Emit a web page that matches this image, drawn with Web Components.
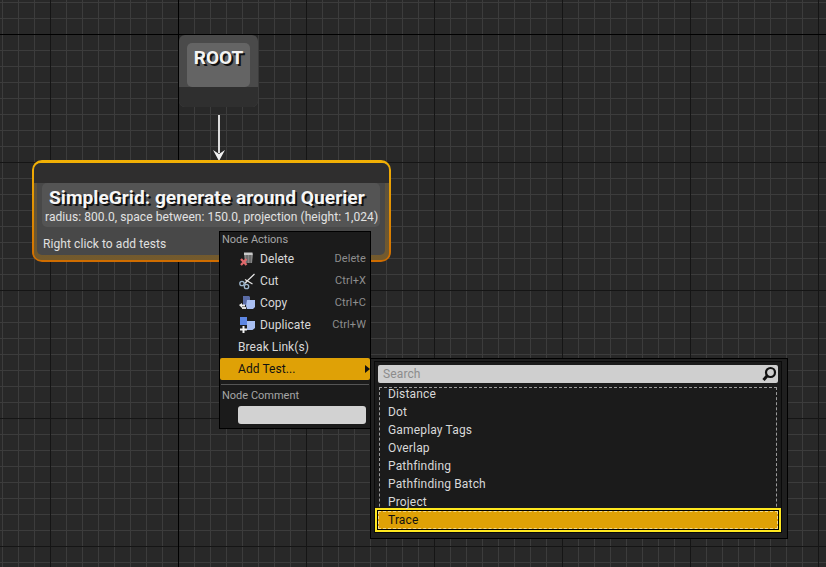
<!DOCTYPE html>
<html>
<head>
<meta charset="utf-8">
<title>Behavior query graph</title>
<style>
    html, body { margin: 0; padding: 0; width: 826px; height: 567px; overflow: hidden; background: #282828; }
    body { font-family: Roboto, "Liberation Sans", sans-serif; }
</style>
</head>
<body>
<graph-canvas>
    <root-node></root-node>
    <query-node title="SimpleGrid: generate around Querier"
                detail="radius: 800.0, space between: 150.0, projection (height: 1,024)"
                hint="Right click to add tests"></query-node>
    <context-menu>
        <menu-heading>Node Actions</menu-heading>
        <menu-item shortcut="Delete"><menu-icon name="delete" slot="icon"></menu-icon>Delete</menu-item>
        <menu-item shortcut="Ctrl+X"><menu-icon name="cut" slot="icon"></menu-icon>Cut</menu-item>
        <menu-item shortcut="Ctrl+C"><menu-icon name="copy" slot="icon"></menu-icon>Copy</menu-item>
        <menu-item shortcut="Ctrl+W"><menu-icon name="duplicate" slot="icon"></menu-icon>Duplicate</menu-item>
        <menu-item>Break Link(s)</menu-item>
        <menu-item active arrow>Add Test...</menu-item>
        <menu-rule></menu-rule>
        <menu-heading>Node Comment</menu-heading>
        <comment-box></comment-box>
    </context-menu>
    <test-picker>
        <picker-row>Distance</picker-row>
        <picker-row>Dot</picker-row>
        <picker-row>Gameplay Tags</picker-row>
        <picker-row>Overlap</picker-row>
        <picker-row>Pathfinding</picker-row>
        <picker-row>Pathfinding Batch</picker-row>
        <picker-row>Project</picker-row>
        <picker-row selected>Trace</picker-row>
    </test-picker>
</graph-canvas>

<script>
class GraphCanvas extends HTMLElement {
    connectedCallback() {
        this.attachShadow({ mode: 'open' });
        this.shadowRoot.innerHTML = `
            <style>
                :host {
                    display: block;
                    position: relative;
                    width: 826px;
                    height: 567px;
                    overflow: hidden;
                    background-color: #282828;
                    background-image:
                        linear-gradient(#000, #000),
                        linear-gradient(#000, #000),
                        linear-gradient(to right, #151515 1px, transparent 1px),
                        linear-gradient(to bottom, #151515 1px, transparent 1px),
                        linear-gradient(to right, #3c3c3c 1px, transparent 1px),
                        linear-gradient(to bottom, #3c3c3c 1px, transparent 1px);
                    background-size: 1px 100%, 100% 1px, 128px 128px, 128px 128px, 16px 16px, 16px 16px;
                    background-position: 178px 0, 0 34px, 50px 0, 0 34px, 2px 0, 0 2px;
                    background-repeat: no-repeat, no-repeat, repeat, repeat, repeat, repeat;
                }
                svg { position: absolute; left: 212px; top: 114px; }
            </style>
            <svg width="14" height="48" viewBox="0 0 14 48">
                <rect x="6" y="1" width="2" height="38" fill="#dcdcdc"/>
                <polygon points="1,36 7,40 13,36 7,47" fill="#f2f2f2"/>
            </svg>
            <slot></slot>
        `;
    }
}

class RootNode extends HTMLElement {
    connectedCallback() {
        this.attachShadow({ mode: 'open' });
        this.shadowRoot.innerHTML = `
            <style>
                :host {
                    position: absolute;
                    left: 179px;
                    top: 35px;
                    width: 79px;
                    height: 72px;
                    display: flex;
                    flex-direction: column;
                    border-radius: 6px;
                    overflow: hidden;
                    background: #4a4a4a;
                }
                .top { flex: 1; padding: 8px 8px 0; display: flex; }
                .label {
                    flex: 1;
                    background: #646464;
                    border-radius: 5px;
                    text-align: center;
                    font: bold 19px/30px Roboto, sans-serif;
                    color: #f4f4f4;
                    text-shadow: 2px 2px 0 #111;
                }
                .foot { height: 20px; background: #2f2f2f; }
            </style>
            <div class="top"><div class="label">ROOT</div></div>
            <div class="foot"></div>
        `;
    }
}

class QueryNode extends HTMLElement {
    connectedCallback() {
        this.attachShadow({ mode: 'open' });
        this.shadowRoot.innerHTML = `
            <style>
                :host {
                    position: absolute;
                    left: 32px;
                    top: 160px;
                    width: 359px;
                    height: 102px;
                    box-sizing: border-box;
                    padding: 3px 2px 2px;
                    border-radius: 10px;
                    background: linear-gradient(#f2b105, #cf6c00);
                }
                .rim {
                    height: 100%;
                    box-sizing: border-box;
                    display: flex;
                    flex-direction: column;
                    border-radius: 7px;
                    overflow: hidden;
                    background: linear-gradient(#565044, #745a2c);
                }
                .bar { height: 20px; flex: none; background: #2f2e2e; }
                .body {
                    flex: 1;
                    margin: 0 4px 5px 3px;
                    border-radius: 0 0 5px 5px;
                    background: #484848;
                }
                .panel {
                    height: 44px;
                    margin: 0 5px;
                    box-sizing: border-box;
                    padding-top: 4px;
                    border-radius: 5px;
                    background: #545454;
                }
                .title {
                    padding-left: 7px;
                    font: bold 19.200px/22px Roboto, sans-serif;
                    color: #f6f6f6;
                    text-shadow: 2px 2px 0 #111;
                    white-space: nowrap;
                }
                .detail {
                    padding-left: 3px;
                    font: 12px/16px Roboto, sans-serif;
                    letter-spacing: 0.065px;
                    color: #e2e2e2;
                    white-space: nowrap;
                }
                .hint {
                    padding: 9px 0 0 6px;
                    font: 12px/16px Roboto, sans-serif;
                    letter-spacing: 0.08px;
                    color: #e0e0e0;
                }
            </style>
            <div class="rim">
                <div class="bar"></div>
                <div class="body">
                    <div class="panel">
                        <div class="title">${this.getAttribute('title')}</div>
                        <div class="detail">${this.getAttribute('detail')}</div>
                    </div>
                    <div class="hint">${this.getAttribute('hint')}</div>
                </div>
            </div>
        `;
    }
}

class ContextMenu extends HTMLElement {
    connectedCallback() {
        this.attachShadow({ mode: 'open' });
        this.shadowRoot.innerHTML = `
            <style>
                :host {
                    position: absolute;
                    left: 219px;
                    top: 231px;
                    width: 152px;
                    height: 198px;
                    box-sizing: border-box;
                    display: flex;
                    flex-direction: column;
                    background: #1b1b1b;
                    border: 1px solid #000;
                }
            </style>
            <slot></slot>
        `;
    }
}

class MenuHeading extends HTMLElement {
    connectedCallback() {
        this.attachShadow({ mode: 'open' });
        this.shadowRoot.innerHTML = `
            <style>
                :host {
                    display: block;
                    height: 16px;
                    padding-left: 2px;
                    font: 11px/16px Roboto, sans-serif;
                    color: #a6a6a6;
                }
            </style>
            <slot></slot>
        `;
    }
}

class MenuItem extends HTMLElement {
    connectedCallback() {
        const shortcut = this.getAttribute('shortcut') || '';
        const arrow = this.hasAttribute('arrow') ? '<div class="arrow"></div>' : '';
        this.attachShadow({ mode: 'open' });
        this.shadowRoot.innerHTML = `
            <style>
                :host {
                    display: flex;
                    align-items: center;
                    height: 22px;
                    padding: 0 4px 0 18px;
                    font: 12px/22px Roboto, sans-serif;
                    letter-spacing: 0.08px;
                    color: #d8d8d8;
                }
                :host([active]) { background: #dfa106; color: #111; border-radius: 2px; }
                .text { flex: 1; }
                .keys { font-size: 11px; letter-spacing: 0.1px; color: #8e8e8e; }
                .arrow {
                    width: 0;
                    height: 0;
                    margin-right: -4px;
                    border-left: 5px solid #111;
                    border-top: 4px solid transparent;
                    border-bottom: 4px solid transparent;
                }
            </style>
            <slot name="icon"></slot>
            <div class="text"><slot></slot></div>
            <div class="keys">${shortcut}</div>
            ${arrow}
        `;
    }
}

const ICONS = {
    delete: `
        <path d="M6 3h8l1 1-1 9H7L6 4z" fill="#858585"/>
        <path d="M6 2.500h8.500V5H6z" fill="#c9c9c9"/>
        <path d="M9 5v8M12 5v8" stroke="#555" stroke-width="1"/>
        <path d="M3 9l5.500 6M8.500 9L3 15" stroke="#e0696b" stroke-width="2.300"/>`,
    cut: `
        <path d="M16.500 2L6.500 11.500M14.500 12L7 7.500" stroke="#e8e8e8" stroke-width="1.200" fill="none"/>
        <path d="M9 9.500l-3 3" stroke="#cfcfcf" stroke-width="1"/>
        <circle cx="4" cy="11.500" r="2.200" stroke="#9db5cc" stroke-width="1.300" fill="none"/>
        <circle cx="8.500" cy="14.500" r="2.200" stroke="#9db5cc" stroke-width="1.300" fill="none"/>`,
    copy: `
        <path d="M5 2h6l1 1v8H5z" fill="#5a6ca6"/>
        <path d="M9 6h8v7l-2 2H9l-1-3z" fill="#a9bff2"/>
        <path d="M1 11l3-2v1.500h3v2H4V14z" fill="#efefef"/>
        <path d="M4 13h4v2H4z" fill="#dcdcdc"/>`,
    duplicate: `
        <path d="M2 1h7v8H2z" fill="#5d86e2"/>
        <path d="M9 5h8v7l-2.500 2H9z" fill="#a9bff2"/>
        <path d="M5.500 10v7M2 13.500h7" stroke="#f2f2f2" stroke-width="2"/>`
};

class MenuIcon extends HTMLElement {
    connectedCallback() {
        this.attachShadow({ mode: 'open' });
        this.shadowRoot.innerHTML = `
            <style>
                :host { display: block; width: 18px; height: 18px; margin-right: 4px; flex: none; }
                svg { display: block; }
            </style>
            <svg width="18" height="18" viewBox="0 0 18 18">${ICONS[this.getAttribute('name')]}</svg>
        `;
    }
}

class MenuRule extends HTMLElement {
    connectedCallback() {
        this.attachShadow({ mode: 'open' });
        this.shadowRoot.innerHTML = `
            <style>
                :host { display: block; flex: none; height: 1px; margin: 4px 1px 3px; background: #555; }
            </style>
        `;
    }
}

class CommentBox extends HTMLElement {
    connectedCallback() {
        this.attachShadow({ mode: 'open' });
        this.shadowRoot.innerHTML = `
            <style>
                :host {
                    display: block;
                    flex: none;
                    height: 18px;
                    margin: 2px 4px 0 18px;
                    border-radius: 3px;
                    background: #d2d2d2;
                }
            </style>
        `;
    }
}

class TestPicker extends HTMLElement {
    connectedCallback() {
        this.attachShadow({ mode: 'open' });
        this.shadowRoot.innerHTML = `
            <style>
                :host {
                    position: absolute;
                    left: 370px;
                    top: 358px;
                    width: 418px;
                    height: 181px;
                    box-sizing: border-box;
                    padding: 2px 5px 5px 3px;
                    background: #1f1f1f;
                    border: 1px solid #000;
                }
                .frame {
                    height: 100%;
                    box-sizing: border-box;
                    padding: 3px 2px 0 3px;
                    border: 1px solid #0a0a0a;
                    background: #1b1b1b;
                }
                .search {
                    height: 18px;
                    margin-right: 1px;
                    display: flex;
                    align-items: center;
                    justify-content: space-between;
                    padding: 0 1px 0 5px;
                    border-radius: 2px;
                    background: #cfcfcf;
                    font: 12px/18px Roboto, sans-serif;
                    letter-spacing: 0.12px;
                    color: #8c8c8c;
                }
                svg { display: block; }
                .list {
                    margin: 4px 2px 0 1px;
                    height: 145px;
                    box-sizing: border-box;
                    border: 1px dashed #9a9a9a;
                    border-bottom: none;
                }
            </style>
            <div class="frame">
                <div class="search">
                    <span>Search</span>
                    <svg width="16" height="16" viewBox="0 0 16 16">
                        <circle cx="9.500" cy="6.500" r="4.500" fill="none" stroke="#111" stroke-width="2.200"/>
                        <path d="M6.200 9.800L2.500 14" stroke="#111" stroke-width="3"/>
                    </svg>
                </div>
                <div class="list"><slot></slot></div>
            </div>
        `;
    }
}

class PickerRow extends HTMLElement {
    connectedCallback() {
        this.attachShadow({ mode: 'open' });
        this.shadowRoot.innerHTML = `
            <style>
                :host {
                    display: block;
                    height: 18px;
                    padding-left: 8px;
                    font: 12px/12px Roboto, sans-serif;
                    letter-spacing: 0.16px;
                    color: #d8d8d8;
                }
                :host([selected]) {
                    height: 24px;
                    margin: -6px -5px 0 -5px;
                    box-sizing: border-box;
                    padding: 1px;
                    border: 2px solid #ffe81f;
                    background: #000;
                    color: #111;
                }
                .fill { height: 100%; }
                :host([selected]) .fill {
                    box-sizing: border-box;
                    padding-left: 9px;
                    line-height: 16px;
                    background: #dfa106;
                    border: 1px dashed #f3d98c;
                }
            </style>
            <div class="fill"><slot></slot></div>
        `;
    }
}

customElements.define('graph-canvas', GraphCanvas);
customElements.define('root-node', RootNode);
customElements.define('query-node', QueryNode);
customElements.define('context-menu', ContextMenu);
customElements.define('menu-heading', MenuHeading);
customElements.define('menu-item', MenuItem);
customElements.define('menu-icon', MenuIcon);
customElements.define('menu-rule', MenuRule);
customElements.define('comment-box', CommentBox);
customElements.define('test-picker', TestPicker);
customElements.define('picker-row', PickerRow);
</script>
</body>
</html>
